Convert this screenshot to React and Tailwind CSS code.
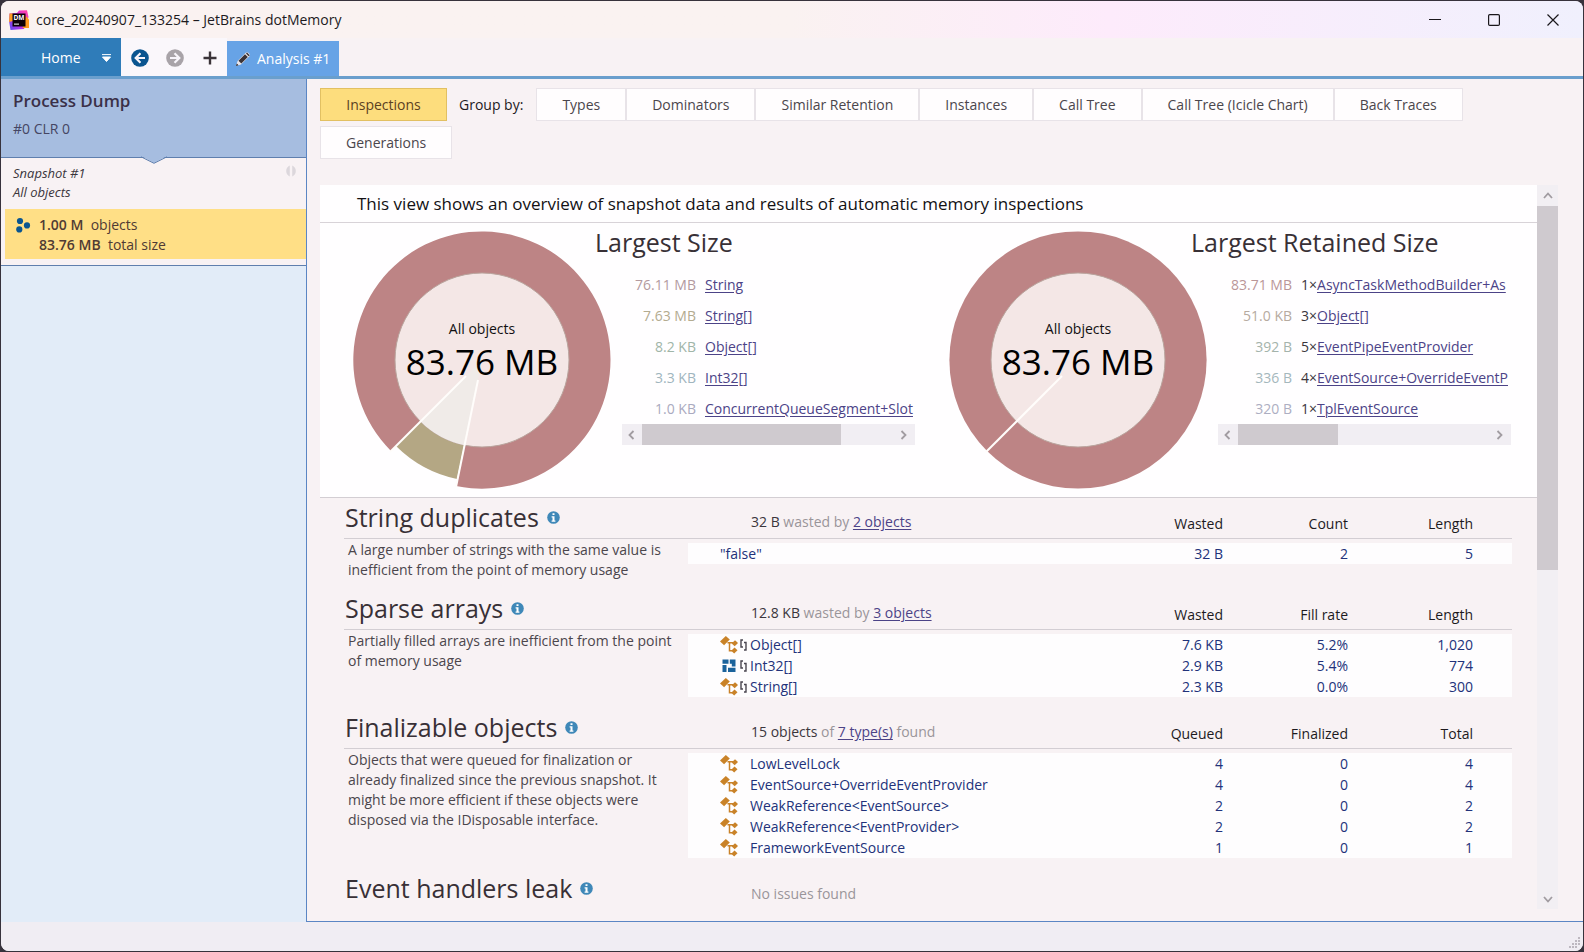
import React from 'react';

const SIZE_ROWS = [
  { size: '76.11 MB', tone: 'text-[#b39a9f]', name: 'String' },
  { size: '7.63 MB', tone: 'text-[#b3ab90]', name: 'String[]' },
  { size: '8.2 KB', tone: 'text-[#a0b5a8]', name: 'Object[]' },
  { size: '3.3 KB', tone: 'text-[#a0b5be]', name: 'Int32[]' },
  { size: '1.0 KB', tone: 'text-[#aaaac0]', name: 'ConcurrentQueueSegment+Slot' },
];

const RETAINED_ROWS = [
  { size: '83.71 MB', tone: 'text-[#ba9698]', count: '1', name: 'AsyncTaskMethodBuilder+As' },
  { size: '51.0 KB', tone: 'text-[#b6aaa0]', count: '3', name: 'Object[]' },
  { size: '392 B', tone: 'text-[#a4b3ab]', count: '5', name: 'EventPipeEventProvider' },
  { size: '336 B', tone: 'text-[#a4b7bc]', count: '4', name: 'EventSource+OverrideEventP' },
  { size: '320 B', tone: 'text-[#adaec2]', count: '1', name: 'TplEventSource' },
];

const TABS = ['Types', 'Dominators', 'Similar Retention', 'Instances', 'Call Tree', 'Call Tree (Icicle Chart)', 'Back Traces', 'Generations'];

function AppLogo() {
  return (
    <svg className="size-5 shrink-0" viewBox="0 0 20 20" aria-hidden="true">
      <defs>
        <linearGradient id="logo" x1="0" y1="1" x2="1" y2="0.2">
          <stop offset="0" stopColor="#5b4df0" />
          <stop offset="0.5" stopColor="#c12fe8" />
          <stop offset="1" stopColor="#ff3fae" />
        </linearGradient>
      </defs>
      <path d="M0.500 3.500 8 3l2-2.500 8-.3L19.500 7 15 19 1.500 20 0 11Z" fill="url(#logo)" />
      <path d="M0.500 3.500H4V11L0 12Z" fill="#ff9a1f" />
      <path d="M17 6 20 9.500V18h-6.500Z" fill="#ff9a1f" />
      <rect x="3.500" y="3.500" width="13" height="13" fill="#0b0008" />
      <text x="4.500" y="9.800" fontSize="6.500" fontWeight="700" fontFamily="Open Sans, sans-serif" fill="#fff">DM</text>
      <rect x="5" y="13.600" width="5" height="1" fill="#fff" />
    </svg>
  );
}

function ArrowCircle({ color, flip }) {
  return (
    <svg className="size-[18px]" viewBox="0 0 18 18" aria-hidden="true">
      <g transform={flip ? 'rotate(180 9 9)' : undefined}>
        <circle cx="9" cy="9" r="8.800" fill={color} />
        <path d="M9.500 4.200 4.700 9l4.800 4.800M5 9h9" fill="none" stroke="#f7f4fa" strokeWidth="2.200" />
      </g>
    </svg>
  );
}

function PencilIcon() {
  return (
    <svg className="size-4" viewBox="0 0 16 16" aria-hidden="true">
      <path d="M1 15l1.600-5L10.800 1.800a1.800 1.800 0 0 1 2.500 0l1 1a1.800 1.800 0 0 1 0 2.500L6 13.400Z" fill="#e9e6ea" />
      <path d="M3.500 9.800 10 3.300l2.800 2.800-6.500 6.500Z" fill="#3a3338" />
      <path d="M11 2.500l1-1 2.700 2.700-1 1Z" fill="#3a3338" />
      <path d="M1 15l.8-2.600 1.800 1.800Z" fill="#2a2428" />
    </svg>
  );
}

function DotsIcon() {
  return (
    <svg className="mt-[2px] size-4 shrink-0" viewBox="0 0 16 16" aria-hidden="true">
      <g fill="#0a5590">
        <circle cx="5" cy="4" r="3.100" />
        <circle cx="12" cy="8.400" r="3.100" />
        <circle cx="4.300" cy="12.400" r="3.100" />
      </g>
    </svg>
  );
}

function InfoIcon() {
  return (
    <svg className="size-[13px] shrink-0" viewBox="0 0 13 13" aria-hidden="true">
      <circle cx="6.500" cy="6.500" r="6.300" fill="#3f88b8" />
      <path d="M5.500 2.200h2v1.800h-2ZM4.600 5.200h2.900v4.300h.9v1.200H4.600V9.500h.9V6.400h-.9Z" fill="#fff" />
    </svg>
  );
}

function ClassIcon() {
  return (
    <svg className="size-[18px] shrink-0" viewBox="0 0 18 18" aria-hidden="true">
      <g fill="#c98228">
        <path d="M0 5.600 5.800 0l4 3.600-5.700 5.600Z" />
        <path d="M11.700 7.500 15 4.300l3 2.700-3.300 3.200Z" />
        <path d="M11.200 14.800l3.300-3.200 3 2.700-3.300 3.200Z" />
      </g>
      <path d="M7.500 6.700h5.500M9.500 6.700v8h3" fill="none" stroke="#c98228" strokeWidth="1.500" />
    </svg>
  );
}

function StructIcon() {
  return (
    <svg className="size-[18px] shrink-0" viewBox="0 0 18 18" aria-hidden="true">
      <g fill="#1b639b">
        <path d="M2.500 2.500h6v4.300h-6ZM2.500 8h4v7h-4Z" />
        <path d="M9.800 2.500h5.700v7h-3.700V6.800h-2ZM8 10.700h7.500V15H8Z" />
      </g>
    </svg>
  );
}

function BracketIcon() {
  return (
    <svg className="h-3 w-2 shrink-0" viewBox="0 0 8 12" aria-hidden="true">
      <path d="M3 1H1v7h2M4 3.500h2V11H4" fill="none" stroke="#4a4650" strokeWidth="1.400" />
    </svg>
  );
}

function Chevron({ dir }) {
  const d = {
    left: 'M7.500 2 3.500 6l4 4',
    right: 'M4.500 2l4 4-4 4',
    up: 'M2 8l4-4.500L10 8',
    down: 'M2 4l4 4.500L10 4',
  }[dir];
  return (
    <svg className="size-3" viewBox="0 0 12 12" aria-hidden="true">
      <path d={d} fill="none" stroke="#a19ca1" strokeWidth="1.800" />
    </svg>
  );
}

function Donut({ sliced }) {
  return (
    <svg className="size-[258px]" viewBox="-129 -129 258 258" role="img" aria-label="All objects 83.76 MB">
      {sliced ? (
        <>
          <path d="M0 0 L-26 126 A128.600 128.600 0 1 0 -91 91 Z" fill="#bd8485" />
          <path d="M0 0 L-86 86 A121.600 121.600 0 0 0 -25 119 Z" fill="#b4a784" />
        </>
      ) : (
        <circle r="128.600" fill="#bd8485" />
      )}
      <circle r="87" fill="#f4e7e6" stroke="#b9a49d" strokeWidth="1" />
      {sliced && <path d="M0 0 L-61.500 61.500 A87 87 0 0 0 -17.500 85.200 Z" fill="#f0ebe8" />}
      <path d="M-16 16 L-92 92" stroke="#fffdfb" strokeWidth="2" />
      {sliced && <path d="M-4 20 L-26 127" stroke="#fffdfb" strokeWidth="2" />}
      <text y="-26" textAnchor="middle" fontSize="14" fill="#111">All objects</text>
      <text y="15" textAnchor="middle" fontSize="35" fill="#000">83.76 MB</text>
    </svg>
  );
}

function SummaryCard({ title, rows, sliced, thumb }) {
  return (
    <section className="flex min-w-0 pl-[33px]">
      <div className="shrink-0 pt-2"><Donut sliced={sliced} /></div>
      <div className="-ml-4 min-w-0 flex-1 pt-[2px] pr-px">
        <h2 className="h-[34px] text-[25px] leading-[34px] whitespace-nowrap text-[#383036]">{title}</h2>
        <div className="mt-[10px] ml-[27px]">
          <ul>
            {rows.map((r) => (
              <li key={r.name} className="flex h-[31px] items-center gap-[9px] whitespace-nowrap">
                <span className={`w-[74px] shrink-0 text-right ${r.tone}`}>{r.size}</span>
                <span className="text-[#3b363c]">
                  {r.count && <>{r.count}×</>}
                  <a href="#type" className="text-[#4c4387] underline underline-offset-2">{r.name}</a>
                </span>
              </li>
            ))}
          </ul>
          <div className="flex h-[21px] bg-[#f1eef3]">
            <button aria-label="Scroll left" className="flex w-5 items-center justify-center"><Chevron dir="left" /></button>
            <div className="flex-1"><div className={`h-full bg-[#cfcacf] ${thumb}`} /></div>
            <button aria-label="Scroll right" className="flex w-6 items-center justify-center"><Chevron dir="right" /></button>
          </div>
        </div>
      </div>
    </section>
  );
}

function Inspection({ title, description, summary, columns, rows }) {
  return (
    <section className="flex pr-[25px] pl-6">
      <div className="w-[344px] shrink-0">
        <h2 className="flex h-10 items-center gap-2 pb-[2px] pl-px text-[25px] leading-none text-[#383036]">
          {title}
          <InfoIcon />
        </h2>
        {description && (
          <p className="border-t border-[#d3ced3] pt-px pr-2 pb-[9px] pl-1 leading-5 text-[#4b464c]">{description}</p>
        )}
      </div>
      {columns ? (
        <table className="mb-[11px] h-fit flex-1 table-fixed border-separate border-spacing-0">
          <colgroup>
            <col />
            <col className="w-[125px]" />
            <col className="w-[125px]" />
            <col className="w-[164px]" />
          </colgroup>
          <thead>
            <tr className="h-[41px]">
              <th className="border-b border-[#d3ced3] pt-2 pl-[63px] text-left font-normal">{summary}</th>
              {columns.map((c, i) => (
                <th key={c} className={`border-b border-[#d3ced3] pt-3 text-right font-normal text-[#1d1a1e] ${i === 2 ? 'pr-[39px]' : ''}`}>{c}</th>
              ))}
            </tr>
          </thead>
          <tbody className="text-[#22327a] before:block before:h-1 before:content-['']">
            {rows.map((r, n) => (
              <tr key={n} className="h-[21px] bg-[#fefdfe] leading-[21px]">
                <td className="p-0 pl-8 whitespace-nowrap">
                  <span className="flex items-center">
                    {r.icon}
                    {r.icon && <span className="flex w-3 justify-center">{r.array && <BracketIcon />}</span>}
                    {r.name}
                  </span>
                </td>
                {r.values.map((v, i) => (
                  <td key={i} className={`p-0 text-right ${i === 2 ? 'pr-[39px]' : ''}`}>{v}</td>
                ))}
              </tr>
            ))}
          </tbody>
        </table>
      ) : (
        <div className="flex-1 pt-[15px] pl-[63px] text-[#9a959a]">{summary}</div>
      )}
    </section>
  );
}

function Summary({ lead, mid, link, tail }) {
  return (
    <span className="text-[#9a959a]">
      <span className="text-[#3b363c]">{lead}</span> {mid}{' '}
      <a href="#objects" className="text-[#4c4387] underline underline-offset-2">{link}</a>
      {tail && <> {tail}</>}
    </span>
  );
}

export default function App() {
  return (
    <div className="h-screen bg-[#37323c] px-px pt-px pb-px font-['Open_Sans','Noto_Sans',sans-serif] text-sm">
      <div className="flex h-full flex-col overflow-hidden rounded-lg bg-[#f8f2f4]">
        <header className="flex h-[37px] shrink-0 items-center bg-linear-to-r from-[#faf2f1] from-50% via-[#fdebfb] via-70% to-[#f0f0fd] pr-px pl-2">
          <AppLogo />
          <h1 className="ml-[7px] flex-1 text-[#1d1a1e]">core_20240907_133254 – JetBrains dotMemory</h1>
          <button aria-label="Minimize" className="flex h-full w-[59px] items-center justify-center">
            <svg className="size-3" viewBox="0 0 12 12"><path d="M0 5.500h12" stroke="#1a171b" /></svg>
          </button>
          <button aria-label="Maximize" className="flex h-full w-[59px] items-center justify-center">
            <svg className="size-3" viewBox="0 0 12 12"><rect x="0.600" y="0.600" width="10.800" height="10.800" rx="1.200" fill="none" stroke="#1a171b" strokeWidth="1.200" /></svg>
          </button>
          <button aria-label="Close" className="flex h-full w-[59px] items-center justify-center">
            <svg className="size-3" viewBox="0 0 12 12"><path d="M0.500.5l11 11M11.500.5l-11 11" stroke="#1a171b" strokeWidth="1.200" /></svg>
          </button>
        </header>

        <nav className="flex h-[41px] shrink-0 items-end border-b-3 border-[#6a9fcd]">
          <button className="flex h-full w-[120px] items-center justify-between bg-[#2f7cb9] pt-[2px] pr-[10px] pl-10 text-white">
            Home
            <svg className="h-2 w-[9px]" viewBox="0 0 9 8"><path d="M0 .6h9M.5 3h8L4.500 7.500Z" fill="#fff" stroke="#fff" strokeWidth="1" /></svg>
          </button>
          <div className="flex h-full w-[106px] items-center gap-[17px] bg-[#faf7fb] pt-[2px] pl-[10px]">
            <button aria-label="Back"><ArrowCircle color="#0a5590" /></button>
            <button aria-label="Forward"><ArrowCircle color="#a8a3a8" flip /></button>
            <button aria-label="Add">
              <svg className="size-[18px]" viewBox="0 0 18 18"><path d="M2.500 9h13M9 2.500v13" stroke="#3a3338" strokeWidth="2.400" /></svg>
            </button>
          </div>
          <button className="flex h-[35px] w-[112px] items-center gap-[6px] bg-[#67a3e6] pl-2 whitespace-nowrap text-white">
            <PencilIcon />
            Analysis #1
          </button>
        </nav>

        <div className="flex min-h-0 flex-1">
          <aside className="flex w-[305px] shrink-0 flex-col">
            <div className="relative h-[79px] border-b border-[#5f7fae] bg-[#a6bde0] pt-[10px] pl-3">
              <h2 className="text-[17px] leading-6 font-semibold text-[#3a3048]">Process Dump</h2>
              <p className="mt-1 leading-6 text-[#454663]">#0 CLR 0</p>
              <svg className="absolute top-[77px] left-[140px] h-2 w-[26px]" viewBox="0 0 26 8" aria-hidden="true">
                <path d="M0 0 13 7 26 0Z" fill="#a6bde0" />
                <path d="M0 .8 13 7.300 26 .8" fill="none" stroke="#5f7fae" />
              </svg>
            </div>
            <div className="border-b border-[#5f7fae] pb-[6px]">
              <div className="flex h-[51px] justify-between pt-[6px] pr-[9px] pl-3 text-[13px] leading-[19px] text-[#3b363c] italic">
                <p>Snapshot #1<br />All objects</p>
                <svg className="mt-[1px] size-3" viewBox="0 0 12 12" aria-hidden="true">
                  <path d="M4.800.5a6 6 0 0 0 0 11ZM7.200.5a6 6 0 0 1 0 11Z" fill="#dcd7dc" />
                </svg>
              </div>
              <div className="ml-1 flex gap-2 bg-[#ffdf86] pt-[6px] pr-2 pb-1 pl-[10px] text-[#4f3a34]">
                <DotsIcon />
                <p className="leading-5">
                  <span className="font-semibold">1.00 M</span>&nbsp; objects<br />
                  <span className="font-semibold">83.76 MB</span>&nbsp; total size
                </p>
              </div>
            </div>
            <div className="flex-1 bg-[#e2ecf8]" />
          </aside>

          <main className="flex min-w-0 flex-1 flex-col border-b border-l border-[#5b86c4] pt-[9px] pr-[25px] pb-3 pl-[13px]">
            <div className="mb-[26px] flex flex-wrap items-center gap-y-[5px]">
              <button className="h-[33px] w-[127px] border border-[#e2c062] bg-[#fddd7d] text-[#5b4122]">Inspections</button>
              <span className="mr-[13px] ml-3 text-[#1d1a1e]">Group by:</span>
              {TABS.map((t) => (
                <button key={t} className="h-[33px] border border-[#e8e3e8] bg-[#fffdfe] px-[25px] text-[#4b464c]">{t}</button>
              ))}
            </div>

            <div className="flex min-h-0 flex-1">
              <div className="min-w-0 flex-1 overflow-hidden">
                <div className="border-b border-[#d3ced3] bg-[#fffeff]">
                  <p className="h-[38px] border-b border-[#d8d3d8] pl-[37px] text-[17px] leading-[38px] text-[#131114]">
                    This view shows an overview of snapshot data and results of automatic memory inspections
                  </p>
                  <div className="grid h-[274px] grid-cols-2 pr-[25px]">
                    <SummaryCard title="Largest Size" rows={SIZE_ROWS} sliced thumb="w-4/5" />
                    <SummaryCard title="Largest Retained Size" rows={RETAINED_ROWS} thumb="w-2/5" />
                  </div>
                </div>

                <Inspection
                  title="String duplicates"
                  description="A large number of strings with the same value is inefficient from the point of memory usage"
                  summary={<Summary lead="32 B" mid="wasted by" link="2 objects" />}
                  columns={['Wasted', 'Count', 'Length']}
                  rows={[{ name: '"false"', values: ['32 B', '2', '5'] }]}
                />
                <Inspection
                  title="Sparse arrays"
                  description="Partially filled arrays are inefficient from the point of memory usage"
                  summary={<Summary lead="12.8 KB" mid="wasted by" link="3 objects" />}
                  columns={['Wasted', 'Fill rate', 'Length']}
                  rows={[
                    { icon: <ClassIcon />, array: true, name: 'Object[]', values: ['7.6 KB', '5.2%', '1,020'] },
                    { icon: <StructIcon />, array: true, name: 'Int32[]', values: ['2.9 KB', '5.4%', '774'] },
                    { icon: <ClassIcon />, array: true, name: 'String[]', values: ['2.3 KB', '0.0%', '300'] },
                  ]}
                />
                <Inspection
                  title="Finalizable objects"
                  description="Objects that were queued for finalization or already finalized since the previous snapshot. It might be more efficient if these objects were disposed via the IDisposable interface."
                  summary={<Summary lead="15 objects" mid="of" link="7 type(s)" tail="found" />}
                  columns={['Queued', 'Finalized', 'Total']}
                  rows={[
                    { icon: <ClassIcon />, name: 'LowLevelLock', values: ['4', '0', '4'] },
                    { icon: <ClassIcon />, name: 'EventSource+OverrideEventProvider', values: ['4', '0', '4'] },
                    { icon: <ClassIcon />, name: 'WeakReference<EventSource>', values: ['2', '0', '2'] },
                    { icon: <ClassIcon />, name: 'WeakReference<EventProvider>', values: ['2', '0', '2'] },
                    { icon: <ClassIcon />, name: 'FrameworkEventSource', values: ['1', '0', '1'] },
                  ]}
                />
                <Inspection title="Event handlers leak" summary="No issues found" />
              </div>
              <div className="flex w-[21px] shrink-0 flex-col bg-[#f2eff3]">
                <button aria-label="Scroll up" className="flex h-[21px] items-center justify-center"><Chevron dir="up" /></button>
                <div className="flex-1"><div className="h-[364px] bg-[#cfcacf]" /></div>
                <button aria-label="Scroll down" className="flex h-[21px] items-center justify-center"><Chevron dir="down" /></button>
              </div>
            </div>
          </main>
        </div>

        <footer className="flex h-[29px] shrink-0 items-end justify-end bg-[#f0edf3] p-[2px]">
          <svg className="size-3" viewBox="0 0 12 12" aria-hidden="true">
            <g fill="#bdb8c0">
              <path d="M9 0h2v2H9ZM6 3h2v2H6ZM9 3h2v2H9ZM3 6h2v2H3ZM6 6h2v2H6ZM9 6h2v2H9ZM0 9h2v2H0ZM3 9h2v2H3ZM6 9h2v2H6Z" />
            </g>
          </svg>
        </footer>
      </div>
    </div>
  );
}
